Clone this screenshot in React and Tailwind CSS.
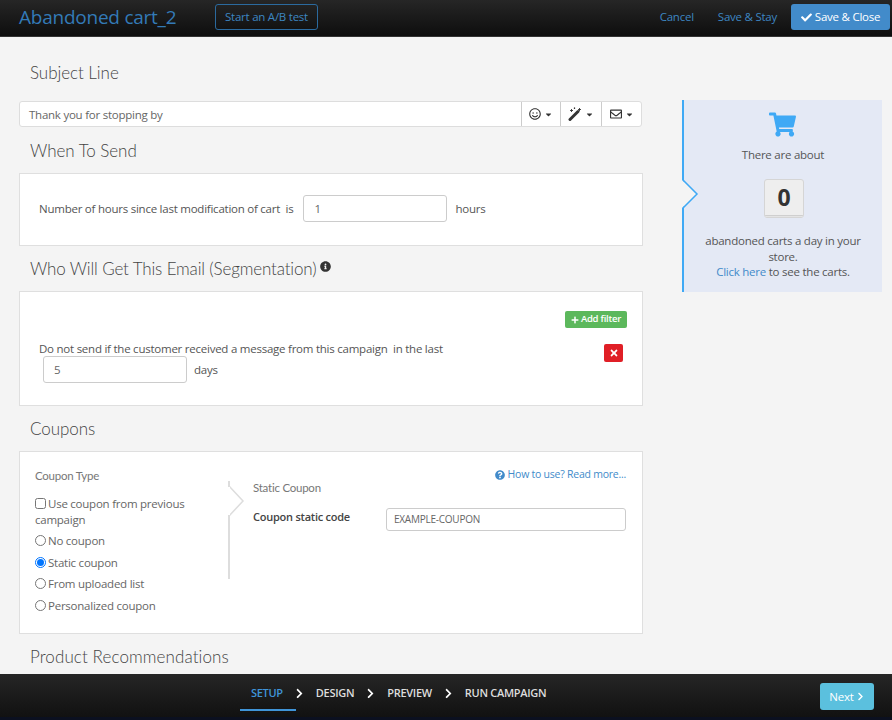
import React from 'react';
import {
  FaCaretDown,
  FaCheck,
  FaChevronRight,
  FaInfoCircle,
  FaPlus,
  FaQuestionCircle,
  FaRegEnvelope,
  FaRegSmile,
  FaShoppingCart,
  FaTimes,
} from 'react-icons/fa';

const WandIcon = ({ className = '' }) => (
  <svg className={className} width="14" height="14" viewBox="0 0 14 14">
    <path d="M2 12.5 L10 4.5" stroke="currentColor" strokeWidth="3" strokeLinecap="round" />
    <path d="M11.5 1 V4 M10 2.5 H13 M3.5 2 V5 M2 3.5 H5 M6.5 0.5 V2 M5.8 1.2 H7.2" stroke="currentColor" strokeWidth="0.9" />
  </svg>
);

const Heading = ({ children, className = '' }) => (
  <div className={`h-[24px] pt-[1px] pl-[11px] flex items-center text-[17px] font-light tracking-[-0.05px] text-[#444] font-['Lato',sans-serif] ${className}`}>
    {children}
  </div>
);

const Card = ({ children, className = '' }) => (
  <div className={`bg-white border border-[#dfdfdf] ${className}`}>{children}</div>
);

const TextBox = ({ value, className = '' }) => (
  <div className={`bg-white border border-[#ccc] rounded-[3px] flex items-center text-[#666] ${className}`}>
    {value}
  </div>
);

const DropButton = ({ icon: Icon, size = 'text-[12px]', className = '' }) => (
  <div className={`h-full flex items-center justify-center gap-[3px] border-l border-[#ccc] text-[#333] ${className}`}>
    <Icon className={size} />
    <FaCaretDown className="text-[9px]" />
  </div>
);

const Radio = ({ label, checked }) => (
  <label className="flex items-center h-[21.5px] text-[#666]">
    <span className={`w-[11px] h-[11px] rounded-full border flex items-center justify-center mr-[2px] bg-white ${checked ? 'border-[#0075ff]' : 'border-[#767676]'}`}>
      {checked && <span className="w-[7px] h-[7px] rounded-full bg-[#0075ff]" />}
    </span>
    {label}
  </label>
);

const Step = ({ label, active }) => (
  <span className={active ? 'text-[#3f94d8]' : 'text-[#ddd]'}>{label}</span>
);

const StepArrow = () => <FaChevronRight className="text-[11px] text-white mx-[11px]" />;

export default function App() {
  return (
    <div className="w-[892px] h-[720px] overflow-hidden flex flex-col bg-[#f4f4f4] text-[11.5px] tracking-[-0.24px] text-[#555] font-['Open_Sans',sans-serif]">
      <header className="h-[37px] shrink-0 flex items-center bg-gradient-to-b from-[#262626] to-[#0e0e0e] border-b border-[#333] pl-[19px] pr-[2px] pb-[2px]">
        <div className="text-[19px] text-[#337ab7] w-[196px]">Abandoned cart_2</div>
        <div className="h-[26px] w-[103px] flex items-center justify-center border border-[#2b6a9e] rounded-[3px] text-[#3d86c2]">
          Start an A/B test
        </div>
        <div className="ml-auto flex items-center text-[#3d86c2]">
          <span className="mr-[24px]">Cancel</span>
          <span className="mr-[14px]">Save &amp; Stay</span>
          <div className="h-[26px] w-[99px] flex items-center justify-center gap-[3px] bg-[#428bca] rounded-[3px] text-white">
            <FaCheck className="text-[11px]" />
            Save &amp; Close
          </div>
        </div>
      </header>

      <main className="flex-1 min-h-0 overflow-hidden flex pl-[19px]">
        <div className="w-[624px] shrink-0 pt-[23px]">
          <Heading>Subject Line</Heading>
          <div className="mt-[17px] h-[26px] w-[623px] flex items-center bg-white border border-[#ddd] rounded-[3px]">
            <div className="flex-1 pl-[9px] pt-[1px] text-[#666]">Thank you for stopping by</div>
            <DropButton icon={FaRegSmile} className="w-[39px]" />
            <DropButton icon={WandIcon} size="" className="w-[41px]" />
            <DropButton icon={FaRegEnvelope} className="w-[40px]" />
          </div>

          <Heading className="mt-[11px]">When To Send</Heading>
          <Card className="mt-[11px] h-[73px] flex items-center pl-[19px] pb-[2px]">
            <span>Number of hours since last modification of cart&nbsp; is</span>
            <TextBox value="1" className="ml-[10px] w-[144px] h-[27px] pl-[10px]" />
            <span className="ml-[8px]">hours</span>
          </Card>

          <Heading className="mt-[10px]">
            <span className="tracking-[-0.15px]">Who Will Get This Email (Segmentation)</span>
            <FaInfoCircle className="ml-[4px] mb-[4px] text-[11px] text-[#333]" />
          </Heading>
          <Card className="mt-[11px] h-[115px] px-[19px] pt-[19px]">
            <div className="flex justify-end -mr-[4px]">
              <div className="h-[17px] w-[62px] flex items-center justify-center gap-[2px] bg-[#5cb85c] rounded-[2px] text-white text-[9.5px] font-semibold">
                <FaPlus className="text-[8px]" />
                Add filter
              </div>
            </div>
            <div className="flex justify-between mt-[12px]">
              <div>
                <div className="h-[17px] flex items-center">
                  Do not send if the customer received a message from this campaign&nbsp; in the last
                </div>
                <div className="flex items-center ml-[4px] -mt-[1px]">
                  <TextBox value="5" className="w-[144px] h-[27px] pl-[10px]" />
                  <span className="ml-[7px]">days</span>
                </div>
              </div>
              <div className="h-[18px] w-[19px] mt-[4px] flex items-center justify-center bg-[#e01f26] rounded-[2px] text-white">
                <FaTimes className="text-[10px]" />
              </div>
            </div>
          </Card>

          <Heading className="mt-[10px]">Coupons</Heading>
          <Card className="mt-[11px] h-[183px] flex pl-[15px] pr-[16px] pt-[16px]">
            <div className="w-[193px] shrink-0">
              <div className="text-[#777] font-['Lato',sans-serif] leading-[16px]">Coupon Type</div>
              <div className="mt-[12px] leading-[16px] text-[#666]">
                <input type="checkbox" readOnly className="w-[11px] h-[11px] mr-[2px] align-[-1px]" />
                Use coupon from previous campaign
              </div>
              <div className="mt-[2px]">
                <Radio label="No coupon" />
                <Radio label="Static coupon" checked />
                <Radio label="From uploaded list" />
                <Radio label="Personalized coupon" />
              </div>
            </div>
            <div className="relative w-[2px] h-[98px] mt-[13px] bg-[#ddd] shrink-0">
              <svg className="absolute left-0 top-[5px]" width="17" height="30" viewBox="0 0 17 30">
                <path d="M1 0 L15 15 L1 30" fill="#fff" stroke="#ddd" strokeWidth="1.5" />
                <rect x="0" y="1" width="2" height="28" fill="#fff" />
              </svg>
            </div>
            <div className="flex-1 pl-[23px] relative -mt-[2px]">
              <div className="flex justify-end items-center gap-[3px] text-[10.5px] text-[#428bca] h-[16px] pt-[1px]">
                <FaQuestionCircle className="text-[10px]" />
                How to use? Read more...
              </div>
              <div className="text-[#777] font-['Lato',sans-serif] -mt-[2px] leading-[16px]">Static Coupon</div>
              <div className="flex mt-[12px]">
                <div className="w-[133px] text-[11px] font-semibold text-[#444] pt-[1px]">Coupon static code</div>
                <TextBox value="EXAMPLE-COUPON" className="w-[240px] h-[23px] pl-[7px] text-[10px]" />
              </div>
            </div>
          </Card>

          <Heading className="mt-[10px]">
            <span className="tracking-[0.1px]">Product Recommendations</span>
          </Heading>
        </div>

        <aside className="relative ml-[39px] mt-[63px] w-[200px] h-[192px] shrink-0 bg-[#e4e9f5] border-l-2 border-[#3fa9f5] text-center">
          <svg className="absolute -left-[2px] top-[80px]" width="17" height="28" viewBox="0 0 17 28">
            <path d="M0 0 L15 14 L0 28 Z" fill="#f4f4f4" />
            <path d="M1 0 L15 14 L1 28" fill="none" stroke="#3fa9f5" strokeWidth="1.5" />
          </svg>
          <FaShoppingCart className="ml-[85px] mt-[11px] text-[27px] text-[#3fa9f5]" />
          <div className="mt-[9px] h-[16px] leading-[16px]">There are about</div>
          <div className="ml-[80px] mt-[16px] w-[40px] h-[39px] flex flex-col bg-[#eeeeee] border border-[#d5d5d5] rounded-[3px] text-[#333]">
            <div className="flex-1 flex items-center justify-center text-[23px] font-bold">0</div>
            <div className="h-[4px] bg-[#e4e4e4] border-t border-[#cfcfcf] rounded-b-[3px]" />
          </div>
          <div className="mt-[15px] px-[16px] leading-[15.5px]">
            abandoned carts a day in your store.
            <br />
            <span className="text-[#428bca]">Click here</span> to see the carts.
          </div>
        </aside>
      </main>

      <footer className="h-[46px] shrink-0 relative flex items-start bg-gradient-to-b from-[#262626] to-[#111] border-b-[3px] border-[#0b1020]">
        <div className="ml-[251px] h-[38px] flex items-center font-semibold text-[11px] tracking-[-0.3px]">
          <Step label="SETUP" active />
          <StepArrow />
          <Step label="DESIGN" />
          <StepArrow />
          <Step label="PREVIEW" />
          <StepArrow />
          <Step label="RUN CAMPAIGN" />
        </div>
        <div className="absolute left-[240px] top-[35px] w-[56px] h-[2px] bg-[#3f94d8]" />
        <div className="ml-auto mr-[18px] mt-[9px] w-[54px] h-[27px] flex items-center justify-center gap-[2px] bg-[#5bc0de] rounded-[3px] text-white">
          Next
          <FaChevronRight className="text-[9px]" />
        </div>
      </footer>
    </div>
  );
}
